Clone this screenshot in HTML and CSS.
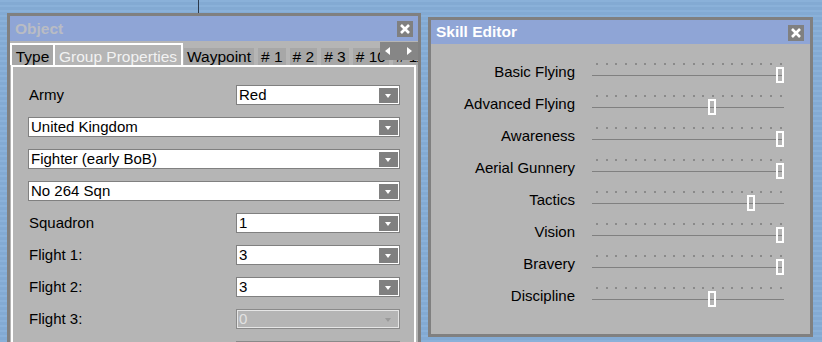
FILE: index.html
```html
<!DOCTYPE html>
<html>
<head>
<meta charset="utf-8">
<title>Object / Skill Editor</title>
<link rel="stylesheet" href="styles.css">
</head>
<body>
<div class="desktop">
  <div class="gridline"></div>

  <section class="win obj">
    <header class="titlebar inactive">
      <span class="title">Object</span>
      <span class="close"><svg width="10" height="10" viewBox="0 0 10 10"><path d="M1 1 L9 9 M9 1 L1 9" stroke="#fff" stroke-width="2.6" fill="none"/></svg></span>
    </header>
    <div class="tabstrip">
      <div class="tab framed">Type</div>
      <div class="tab active">Group Properties</div>
      <div class="tab plain first-plain">Waypoint</div>
      <div class="tab plain"># 1</div>
      <div class="tab plain"># 2</div>
      <div class="tab plain"># 3</div>
      <div class="tab plain"># 10</div>
      <div class="tab plain"># 11</div>
      <div class="tabnav">
        <svg width="38" height="18" viewBox="0 0 38 18"><path d="M10 5 L10 13 L5 9 Z" fill="#fff"/><path d="M27 5 L27 13 L32 9 Z" fill="#fff"/></svg>
      </div>
    </div>
    <div class="panel">
      <div class="row"><span class="label">Army</span><div class="combo short"><span class="val">Red</span><span class="btn"></span></div></div>
      <div class="row"><div class="combo wide"><span class="val">United Kingdom</span><span class="btn"></span></div></div>
      <div class="row"><div class="combo wide"><span class="val">Fighter (early BoB)</span><span class="btn"></span></div></div>
      <div class="row"><div class="combo wide"><span class="val">No 264 Sqn</span><span class="btn"></span></div></div>
      <div class="row"><span class="label">Squadron</span><div class="combo short"><span class="val">1</span><span class="btn"></span></div></div>
      <div class="row"><span class="label">Flight 1:</span><div class="combo short"><span class="val">3</span><span class="btn"></span></div></div>
      <div class="row"><span class="label">Flight 2:</span><div class="combo short"><span class="val">3</span><span class="btn"></span></div></div>
      <div class="row"><span class="label">Flight 3:</span><div class="combo short disabled"><span class="val">0</span><span class="btn"></span></div></div>
      <div class="row"><span class="label"></span><div class="combo short disabled"><span class="val"></span><span class="btn"></span></div></div>
    </div>
  </section>

  <section class="win skill">
    <header class="titlebar">
      <span class="title">Skill Editor</span>
      <span class="close"><svg width="10" height="10" viewBox="0 0 10 10"><path d="M1 1 L9 9 M9 1 L1 9" stroke="#fff" stroke-width="2.6" fill="none"/></svg></span>
    </header>
    <div class="skills">
      <div class="srow"><span class="slabel">Basic Flying</span><div class="slider"><div class="dots"><i></i><i></i><i></i><i></i><i></i><i></i><i></i><i></i><i></i><i></i><i></i><i></i><i></i><i></i><i></i><i></i><i></i><i></i><i></i><i></i></div><div class="track"></div><div class="thumb" style="left:184px"></div></div></div>
      <div class="srow"><span class="slabel">Advanced Flying</span><div class="slider"><div class="dots"><i></i><i></i><i></i><i></i><i></i><i></i><i></i><i></i><i></i><i></i><i></i><i></i><i></i><i></i><i></i><i></i><i></i><i></i><i></i><i></i></div><div class="track"></div><div class="thumb" style="left:116px"></div></div></div>
      <div class="srow"><span class="slabel">Awareness</span><div class="slider"><div class="dots"><i></i><i></i><i></i><i></i><i></i><i></i><i></i><i></i><i></i><i></i><i></i><i></i><i></i><i></i><i></i><i></i><i></i><i></i><i></i><i></i></div><div class="track"></div><div class="thumb" style="left:184px"></div></div></div>
      <div class="srow"><span class="slabel">Aerial Gunnery</span><div class="slider"><div class="dots"><i></i><i></i><i></i><i></i><i></i><i></i><i></i><i></i><i></i><i></i><i></i><i></i><i></i><i></i><i></i><i></i><i></i><i></i><i></i><i></i></div><div class="track"></div><div class="thumb" style="left:184px"></div></div></div>
      <div class="srow"><span class="slabel">Tactics</span><div class="slider"><div class="dots"><i></i><i></i><i></i><i></i><i></i><i></i><i></i><i></i><i></i><i></i><i></i><i></i><i></i><i></i><i></i><i></i><i></i><i></i><i></i><i></i></div><div class="track"></div><div class="thumb" style="left:155px"></div></div></div>
      <div class="srow"><span class="slabel">Vision</span><div class="slider"><div class="dots"><i></i><i></i><i></i><i></i><i></i><i></i><i></i><i></i><i></i><i></i><i></i><i></i><i></i><i></i><i></i><i></i><i></i><i></i><i></i><i></i></div><div class="track"></div><div class="thumb" style="left:184px"></div></div></div>
      <div class="srow"><span class="slabel">Bravery</span><div class="slider"><div class="dots"><i></i><i></i><i></i><i></i><i></i><i></i><i></i><i></i><i></i><i></i><i></i><i></i><i></i><i></i><i></i><i></i><i></i><i></i><i></i><i></i></div><div class="track"></div><div class="thumb" style="left:184px"></div></div></div>
      <div class="srow"><span class="slabel">Discipline</span><div class="slider"><div class="dots"><i></i><i></i><i></i><i></i><i></i><i></i><i></i><i></i><i></i><i></i><i></i><i></i><i></i><i></i><i></i><i></i><i></i><i></i><i></i><i></i></div><div class="track"></div><div class="thumb" style="left:116px"></div></div></div>
    </div>
  </section>
</div>
</body>
</html>
```

FILE: styles.css
```css
* { box-sizing: border-box; }
html, body {
  margin: 0;
  padding: 0;
  width: 822px;
  height: 342px;
  overflow: hidden;
}
body {
  font-family: "Liberation Sans", Arial, sans-serif;
  font-size: 15px;
  color: #000;
  background: #86aed8;
}
.desktop {
  position: relative;
  width: 822px;
  height: 342px;
  background:
    repeating-linear-gradient(0deg, rgba(255,255,255,0.035) 0 2px, rgba(0,0,0,0.025) 2px 5px),
    #86aed8;
}
.gridline {
  position: absolute;
  left: 198px;
  top: 0;
  width: 1px;
  height: 14px;
  background: #2c3a4c;
}

/* windows */
.win {
  position: absolute;
  border: 3px solid #808080;
  background: #b5b5b5;
  overflow: hidden;
  display: flex;
  flex-direction: column;
}
.obj { left: 7px; top: 13px; width: 414px; height: 345px; }
.skill { left: 428px; top: 17px; width: 385px; height: 320px; }

.titlebar {
  display: flex;
  align-items: flex-start;
  justify-content: space-between;
  background: #8fa5d6;
  flex: none;
}
.obj .titlebar { height: 25px; padding: 0 5px 0 5px; }
.skill .titlebar { height: 24px; padding: 0 6px 0 5px; }
.title {
  font-weight: bold;
  font-size: 15.5px;
  color: #fff;
}
.obj .title { line-height: 25px; }
.skill .title { line-height: 24px; }
.inactive .title { color: #b9bcc4; }
.close {
  margin-top: 5px;
  width: 16px;
  height: 16px;
  background: #808080;
  display: flex;
  align-items: center;
  justify-content: center;
}
.close svg { display: block; }

/* tabs */
.tabstrip {
  position: relative;
  flex: none;
  height: 24px;
  display: flex;
  align-items: flex-end;
  overflow: hidden;
  white-space: nowrap;
}
.tab {
  flex: none;
  font-size: 15.5px;
  text-align: center;
}
.tab.framed {
  width: 45px;
  height: 22px;
  border: 2px solid #fff;
  border-bottom: 0;
  background: #a7a7a7;
  padding-top: 3px;
  line-height: 17px;
}
.tab.active {
  width: 128px;
  height: 22px;
  border-top: 2px solid #fff;
  border-right: 2px solid #fff;
  color: #f2f2f2;
  padding-top: 3px;
  line-height: 17px;
}
.tab.plain {
  height: 17px;
  line-height: 18px;
  background: #a7a7a7;
  padding: 0 3px;
  margin-left: 4px;
}
.tab.plain.first-plain { margin-left: 1px; padding: 0 3px; }
.tabnav {
  position: absolute;
  right: 0;
  top: 1px;
  width: 38px;
  height: 18px;
  background: #868686;
}
.tabnav svg { display: block; }

/* form panel */
.panel {
  flex: 1;
  margin: 0 2px 0 1px;
  border: 2px solid #fff;
  padding: 18px 14px 0 15px;
  display: flex;
  flex-direction: column;
  gap: 12px;
}
.row {
  display: flex;
  align-items: center;
  height: 20px;
}
.label {
  flex: 1;
  line-height: 20px;
  padding-left: 1px;
}
.combo {
  height: 20px;
  border: 1px solid #808080;
  background: #fff;
  display: flex;
  align-items: flex-start;
  padding-right: 1px;
}
.combo.short { width: 164px; }
.combo.wide { width: 100%; }
.combo .val {
  flex: 1;
  line-height: 18px;
  padding-left: 2px;
  white-space: nowrap;
}
.combo .btn {
  margin-top: 2px;
  width: 19px;
  height: 15px;
  background: #808080;
  position: relative;
}
.combo .btn::after {
  content: "";
  position: absolute;
  left: 6px;
  top: 6px;
  border-left: 3.5px solid transparent;
  border-right: 3.5px solid transparent;
  border-top: 4px solid #fff;
}
.combo.disabled {
  background: #b5b5b5;
  border-color: #8a8a8a;
  box-shadow: inset 0 0 0 1px #e6e6e6;
}
.combo.disabled .val { color: #e2e2e2; }
.combo.disabled .btn { background: transparent; }
.combo.disabled .btn::after { border-top-color: #9a9a9a; }

/* skill editor */
.skills {
  padding-top: 16px;
  display: flex;
  flex-direction: column;
  gap: 8px;
}
.srow {
  display: flex;
  height: 24px;
}
.slabel {
  width: 144px;
  text-align: right;
  line-height: 24px;
  margin-right: 17px;
  white-space: nowrap;
}
.slider {
  position: relative;
  width: 192px;
  height: 24px;
}
.dots {
  display: flex;
  justify-content: space-between;
  height: 2px;
  margin: 3px 2px 0 4px;
}
.dots i {
  display: block;
  width: 2px;
  height: 2px;
  background: #8a8a8a;
}
.track {
  margin-top: 10px;
  height: 1px;
  background: #808080;
}
.thumb {
  position: absolute;
  top: 7px;
  width: 8px;
  height: 16px;
  border: 2px solid #fff;
}
```
